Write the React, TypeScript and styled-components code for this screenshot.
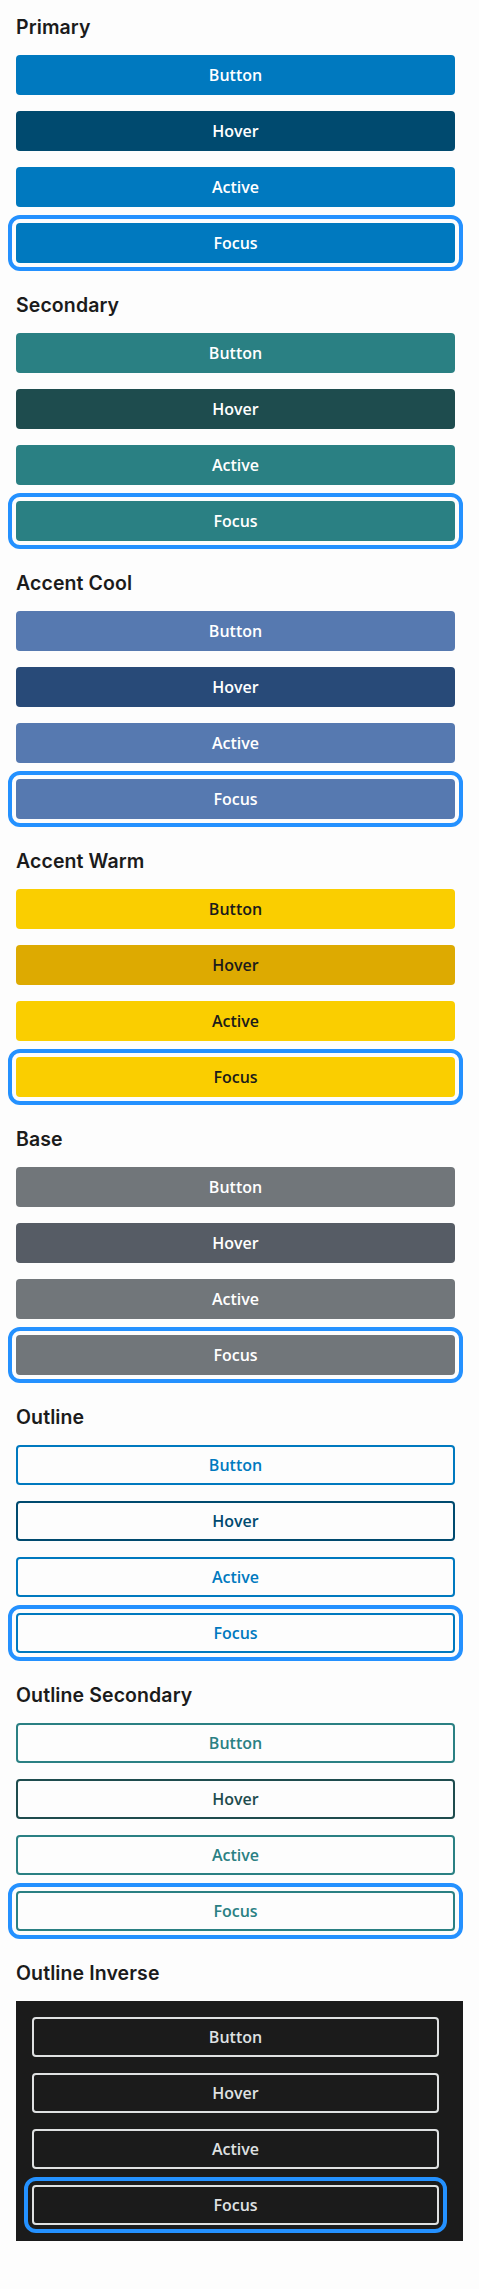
import React from "react";
import styled, { createGlobalStyle, css } from "styled-components";

const GlobalStyle = createGlobalStyle`
  html, body { margin: 0; padding: 0; background: #fdfdfd; }
  body { font-family: "Open Sans", "Noto Sans", sans-serif; }
`;

type Variant = {
  name: string;
  kind: "solid" | "outline";
  base: string;
  hover: string;
  text: string;
  hoverText?: string;
  inverse?: boolean;
};

const variants: Variant[] = [
  { name: "Primary", kind: "solid", base: "#0079bf", hover: "#004a6f", text: "#ffffff" },
  { name: "Secondary", kind: "solid", base: "#2a8083", hover: "#1e4c4e", text: "#ffffff" },
  { name: "Accent Cool", kind: "solid", base: "#5679b0", hover: "#284a78", text: "#ffffff" },
  { name: "Accent Warm", kind: "solid", base: "#face00", hover: "#ddaa01", text: "#1b1b1b" },
  { name: "Base", kind: "solid", base: "#71767a", hover: "#565c65", text: "#ffffff" },
  { name: "Outline", kind: "outline", base: "#0079bf", hover: "#004a6f", text: "#0079bf", hoverText: "#004a6f" },
  { name: "Outline Secondary", kind: "outline", base: "#2a8083", hover: "#1e4c4e", text: "#2a8083", hoverText: "#1e4c4e" },
  { name: "Outline Inverse", kind: "outline", base: "#dfe1e2", hover: "#dfe1e2", text: "#dfe1e2", hoverText: "#dfe1e2", inverse: true },
];

const Page = styled.main`
  display: flex;
  flex-direction: column;
  gap: 28px;
  padding: 13px 16px 48px 16px;
`;

const Section = styled.section`
  display: flex;
  flex-direction: column;
  gap: 13px;
`;

const Heading = styled.h2`
  margin: 0;
  font-family: "Inter", "Noto Sans", sans-serif;
  font-weight: 600;
  font-size: 19.5px;
  line-height: 29px;
  color: #1b1b1b;
  letter-spacing: 0.1px;
`;

const Stack = styled.div<{ $inverse?: boolean }>`
  display: flex;
  flex-direction: column;
  gap: 16px;
  ${(p) =>
    p.$inverse &&
    css`
      background: #1b1b1b;
      padding: 16px;
    `}
`;

const Btn = styled.button<{
  $kind: "solid" | "outline";
  $bg: string;
  $fg: string;
  $focus?: boolean;
}>`
  box-sizing: border-box;
  width: calc(100% - 8px);
  height: 40px;
  margin: 0;
  padding: 0;
  border-radius: 4px;
  font-family: "Open Sans", "Noto Sans", sans-serif;
  font-weight: 600;
  font-size: 16px;
  line-height: 1;
  color: ${(p) => p.$fg};
  cursor: pointer;
  display: flex;
  align-items: center;
  justify-content: center;
  ${(p) =>
    p.$kind === "solid"
      ? css`
          background: ${p.$bg};
          border: none;
        `
      : css`
          background: transparent;
          border: 2px solid ${p.$bg};
        `}
  ${(p) =>
    p.$focus &&
    css`
      outline: 4px solid #2491ff;
      outline-offset: 4px;
    `}
`;

const states = ["Button", "Hover", "Active", "Focus"] as const;

export default function App() {
  return (
    <>
      <GlobalStyle />
      <Page>
        {variants.map((v) => (
          <Section key={v.name}>
            <Heading>{v.name}</Heading>
            <Stack $inverse={v.inverse}>
              {states.map((s) => {
                const isHover = s === "Hover";
                const bg = isHover ? v.hover : v.base;
                const fg = isHover && v.hoverText ? v.hoverText : v.text;
                return (
                  <Btn key={s} $kind={v.kind} $bg={bg} $fg={fg} $focus={s === "Focus"}>
                    {s}
                  </Btn>
                );
              })}
            </Stack>
          </Section>
        ))}
      </Page>
    </>
  );
}
